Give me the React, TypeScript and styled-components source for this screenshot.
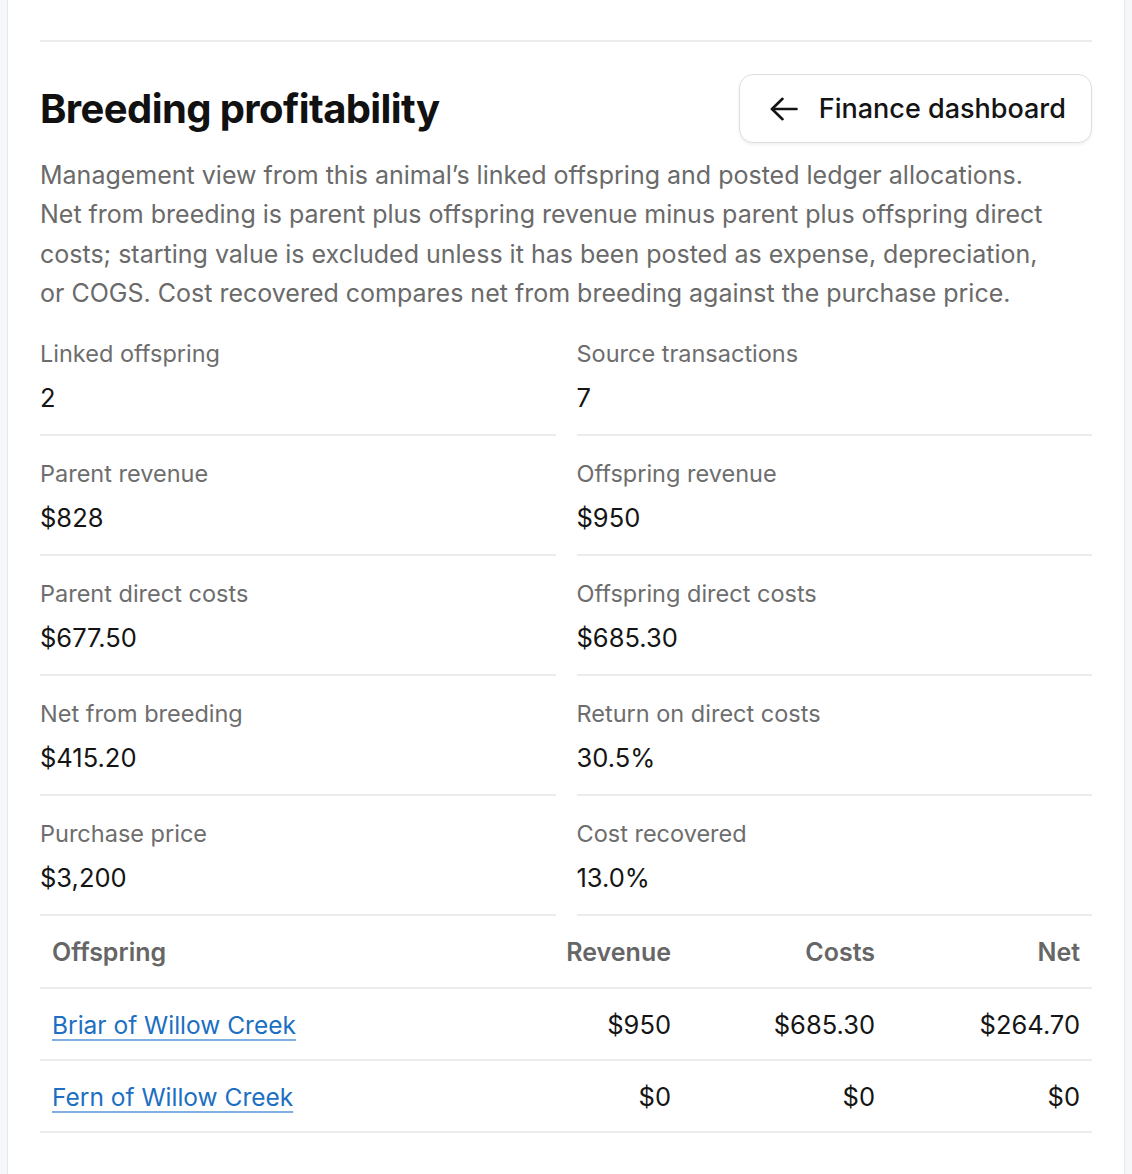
import React from 'react'
import styled, { createGlobalStyle } from 'styled-components'

const GlobalStyle = createGlobalStyle`
  html, body {
    margin: 0;
    padding: 0;
    background: #f6f7f9;
    font-family: Inter, "Noto Sans", "Liberation Sans", sans-serif;
    color: #141414;
  }
  * { box-sizing: border-box; }
`

type Metric = { label: string; value: string }
type OffspringRow = { name: string; revenue: string; costs: string; net: string }

const metrics: Metric[] = [
  { label: 'Linked offspring', value: '2' },
  { label: 'Source transactions', value: '7' },
  { label: 'Parent revenue', value: '$828' },
  { label: 'Offspring revenue', value: '$950' },
  { label: 'Parent direct costs', value: '$677.50' },
  { label: 'Offspring direct costs', value: '$685.30' },
  { label: 'Net from breeding', value: '$415.20' },
  { label: 'Return on direct costs', value: '30.5%' },
  { label: 'Purchase price', value: '$3,200' },
  { label: 'Cost recovered', value: '13.0%' },
]

const offspring: OffspringRow[] = [
  { name: 'Briar of Willow Creek', revenue: '$950', costs: '$685.30', net: '$264.70' },
  { name: 'Fern of Willow Creek', revenue: '$0', costs: '$0', net: '$0' },
]

const ArrowLeft = () => (
  <svg width='28' height='24' viewBox='0 0 28 24' fill='none' stroke='#141414' strokeWidth='2.6' strokeLinecap='round' strokeLinejoin='round'>
    <path d='M26.5 12H2' />
    <path d='M12.5 1.8 2 12l10.5 10.2' />
  </svg>
)

export default function App() {
  return (
    <Page>
      <GlobalStyle />
      <Card>
        <Divider />
        <Header>
          <Title>Breeding profitability</Title>
          <BackButton type='button'>
            <ArrowLeft />
            <span>Finance dashboard</span>
          </BackButton>
        </Header>
        <Intro>
          Management view from this animal’s linked offspring and posted ledger allocations.
          Net from breeding is parent plus offspring revenue minus parent plus offspring direct
          costs; starting value is excluded unless it has been posted as expense, depreciation,
          or COGS. Cost recovered compares net from breeding against the purchase price.
        </Intro>

        <MetricGrid>
          {metrics.map((m) => (
            <MetricCell key={m.label}>
              <MetricLabel>{m.label}</MetricLabel>
              <MetricValue>{m.value}</MetricValue>
            </MetricCell>
          ))}
        </MetricGrid>

        <Table>
          <colgroup>
            <col />
            <col style={{ width: 180 }} />
            <col style={{ width: 204 }} />
            <col style={{ width: 205 }} />
          </colgroup>
          <thead>
            <tr>
              <Th>Offspring</Th>
              <Th $right>Revenue</Th>
              <Th $right>Costs</Th>
              <Th $right>Net</Th>
            </tr>
          </thead>
          <tbody>
            {offspring.map((o) => (
              <tr key={o.name}>
                <Td>
                  <NameLink href='#'>{o.name}</NameLink>
                </Td>
                <Td $right>{o.revenue}</Td>
                <Td $right>{o.costs}</Td>
                <Td $right>{o.net}</Td>
              </tr>
            ))}
          </tbody>
        </Table>
      </Card>
    </Page>
  )
}

const Page = styled.div`
  padding: 0 7px;
  min-height: 1174px;
`

const Card = styled.section`
  background: #ffffff;
  border-left: 1px solid #e6e7eb;
  border-right: 1px solid #e6e7eb;
  padding: 40px 32px 40px;
  min-height: 1174px;
`

const Divider = styled.div`
  height: 2px;
  background: #ececee;
`

const Header = styled.div`
  display: flex;
  justify-content: space-between;
  align-items: center;
  margin-top: 32px;
`

const Title = styled.h2`
  margin: 0;
  font-size: 40px;
  font-weight: 700;
  letter-spacing: -0.6px;
  color: #111111;
`

const BackButton = styled.button`
  display: flex;
  align-items: center;
  gap: 21px;
  height: 69px;
  padding: 0 25px 0 30px;
  background: #ffffff;
  border: 1.5px solid #dcdfe2;
  border-radius: 14px;
  box-shadow: 0 2px 3px rgba(0, 0, 0, 0.06);
  font-family: inherit;
  font-size: 27px;
  font-weight: 500;
  color: #141414;
  cursor: pointer;
`

const Intro = styled.p`
  max-width: 1018px;
  margin: 13px 0 3px;
  font-size: 25px;
  line-height: 39.3px;
  color: #6a6a6a;
`

const MetricGrid = styled.div`
  display: grid;
  grid-template-columns: 1fr 1fr;
  column-gap: 21px;
`

const MetricCell = styled.div`
  display: flex;
  flex-direction: column;
  gap: 8px;
  padding: 20px 0 18px;
  border-bottom: 2px solid #ececee;
`

const MetricLabel = styled.div`
  font-size: 23.5px;
  line-height: 36px;
  color: #6d6d6d;
`

const MetricValue = styled.div`
  font-size: 25.5px;
  line-height: 36px;
  color: #151515;
`

const Table = styled.table`
  width: 100%;
  border-collapse: collapse;
  table-layout: fixed;
`

const Th = styled.th<{ $right?: boolean }>`
  text-align: ${(p) => (p.$right ? 'right' : 'left')};
  padding: 0 12px;
  height: 72px;
  font-size: 25px;
  font-weight: 600;
  color: #666666;
  border-bottom: 2px solid #ececee;
`

const Td = styled.td<{ $right?: boolean }>`
  text-align: ${(p) => (p.$right ? 'right' : 'left')};
  padding: 0 12px;
  height: 72px;
  font-size: 25.5px;
  color: #151515;
  border-bottom: 2px solid #ececee;
`

const NameLink = styled.a`
  font-size: 24.5px;
  color: #1c6fc2;
  text-decoration: underline;
  text-decoration-color: #7fb0e0;
  text-decoration-thickness: 2px;
  text-underline-offset: 5px;
`
